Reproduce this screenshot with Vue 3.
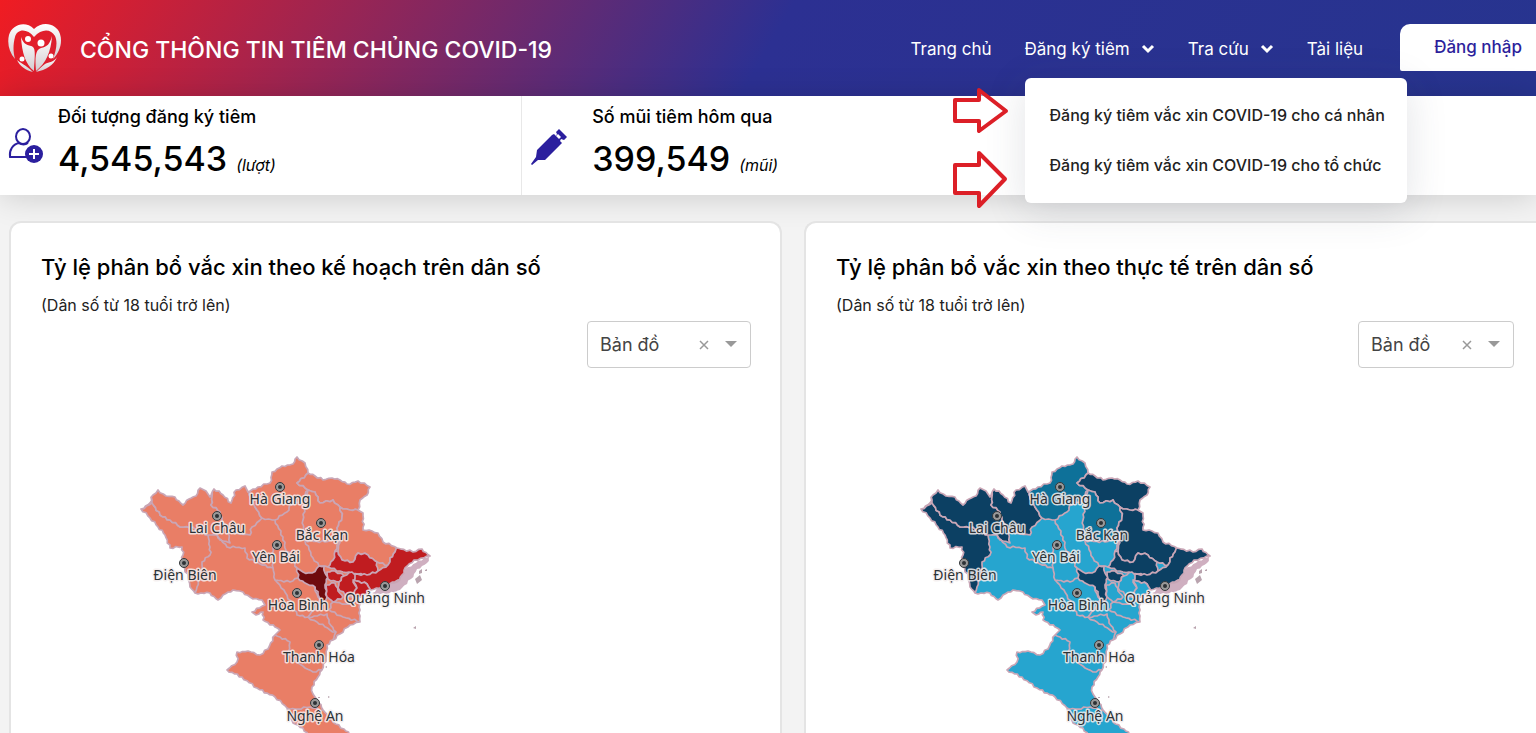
<script setup>
import { ref } from 'vue'

const menu = [
  'Đăng ký tiêm vắc xin COVID-19 cho cá nhân',
  'Đăng ký tiêm vắc xin COVID-19 cho tổ chức',
]

const land = [
  [141, 509], [150, 503], [153, 495], [158, 490], [166, 496], [175, 497], [183, 505], [189, 499], [196, 496], [200, 488],
  [206, 491], [210, 497], [214, 489], [223, 495], [231, 503], [236, 490], [245, 486], [248, 492], [258, 487], [270, 483],
  [272, 472], [282, 466], [293, 464], [297, 457], [305, 463], [308, 473], [315, 476], [323, 480], [332, 478], [340, 480],
  [347, 484], [358, 481], [370, 487], [367, 495], [360, 500], [358, 510], [363, 513], [363, 530], [372, 531], [378, 533],
  [383, 542], [397, 548], [413, 552], [422, 549], [430, 556], [414, 560], [405, 568], [402, 575], [397, 582], [385, 586],
  [371, 590], [359, 598], [360, 610], [360, 622], [350, 625], [340, 634], [333, 640], [327, 645], [326, 658], [322, 670],
  [318, 677], [312, 687], [313, 694], [317, 700], [323, 710], [333, 722], [344, 729], [352, 736], [308, 736], [303, 728],
  [293, 723], [287, 708], [275, 697], [257, 688], [242, 677], [227, 670], [237, 662], [237, 652], [248, 651], [260, 655],
  [268, 649], [275, 635], [280, 630], [263, 620], [263, 612], [256, 615], [252, 612], [265, 605], [262, 600], [250, 597],
  [243, 592], [233, 590], [223, 595], [218, 600], [210, 593], [195, 593], [190, 587], [188, 577], [182, 563], [183, 555],
  [182, 547], [170, 548], [165, 535], [158, 527], [150, 518],
]

const areas = {
  dienBien: [[141, 509], [152, 503], [160, 515], [170, 520], [180, 527], [193, 527], [208, 535], [210, 547], [210, 555], [202, 562], [202, 573], [197, 587], [195, 593], [180, 593], [150, 555]],
  laiChau: [[152, 503], [150, 488], [170, 480], [210, 480], [212, 497], [211, 505], [220, 512], [222, 520], [228, 530], [230, 543], [220, 540], [217, 535], [208, 535], [193, 527], [180, 527], [170, 520], [160, 515]],
  laoCai: [[212, 497], [212, 482], [246, 480], [250, 497], [255, 507], [262, 518], [252, 527], [250, 535], [240, 534], [228, 530], [222, 520], [220, 512], [211, 505]],
  haGiang: [[248, 480], [297, 450], [320, 466], [308, 473], [297, 483], [308, 490], [300, 502], [290, 505], [287, 512], [275, 520], [262, 518], [255, 507], [250, 497]],
  caoBang: [[308, 473], [340, 470], [380, 480], [358, 510], [350, 510], [340, 507], [333, 500], [320, 503], [315, 492], [308, 490], [297, 483]],
  bacKan: [[308, 490], [315, 492], [320, 503], [333, 500], [340, 507], [342, 517], [337, 528], [340, 537], [325, 542], [305, 541], [303, 520], [305, 503]],
  langSon: [[340, 507], [350, 510], [358, 510], [375, 515], [400, 542], [395, 552], [390, 558], [388, 565], [377, 562], [368, 555], [358, 553], [353, 562], [342, 560], [338, 551], [340, 537], [337, 528], [342, 517]],
  bacGiang: [[335, 551], [338, 551], [342, 560], [353, 562], [358, 553], [368, 555], [377, 562], [378, 571], [367, 575], [343, 572], [328, 567], [333, 560]],
  quangNinh: [[397, 546], [422, 540], [438, 557], [408, 575], [372, 594], [367, 584], [353, 580], [352, 574], [367, 575], [378, 571], [388, 565], [390, 558], [395, 552]],
  haNoi: [[297, 568], [303, 572], [312, 573], [319, 566], [324, 566], [325, 573], [328, 577], [325, 585], [327, 597], [323, 602], [318, 597], [315, 587], [307, 584], [298, 578]],
  bacNinh: [[327, 572], [335, 571], [344, 576], [339, 582], [328, 579]],
  haiDuong: [[339, 582], [344, 576], [352, 572], [355, 575], [353, 582], [357, 588], [352, 597], [345, 595], [338, 588]],
  haiPhong: [[353, 580], [367, 584], [372, 594], [365, 598], [352, 597], [357, 588]],
  hungYen: [[326, 585], [335, 583], [338, 591], [343, 597], [333, 602], [327, 597]],
}

const borders = [
  [[217, 535], [227, 547], [245, 548], [247, 558], [260, 564], [273, 568], [275, 580], [290, 582], [298, 578]],
  [[275, 520], [283, 537], [285, 548], [292, 558], [297, 568]],
  [[273, 545], [273, 568]],
  [[305, 541], [313, 558], [319, 566], [328, 567]],
  [[335, 551], [340, 537]],
  [[275, 580], [284, 590], [297, 615], [308, 617], [317, 622], [330, 630], [336, 632], [333, 640]],
  [[315, 587], [320, 600], [316, 607], [308, 617]],
  [[333, 602], [329, 610], [343, 617], [360, 622]],
  [[308, 617], [327, 614], [329, 623], [336, 632]],
  [[333, 602], [346, 604], [360, 600]],
  [[275, 635], [290, 642], [288, 652], [297, 662], [305, 668], [313, 672], [322, 670]],
  [[287, 708], [298, 709], [310, 707], [323, 710]],
]

const coast = [
  [424, 558], [431, 556], [427, 563], [417, 569], [411, 579], [400, 590], [386, 594], [372, 593], [385, 585], [397, 582], [402, 575], [408, 567],
]

const cities = [
  ['Hà Giang', 280, 487, 280, 504], ['Lai Châu', 217, 516, 217, 533], ['Bắc Kạn', 321, 523, 322, 540],
  ['Yên Bái', 277, 545, 276, 562], ['Điện Biên', 184, 563, 185, 580], ['Hòa Bình', 297, 593, 298, 610],
  ['Quảng Ninh', 385, 586, 385, 603], ['Thanh Hóa', 319, 645, 319, 662], ['Nghệ An', 315, 703, 315, 721],
]

// Adds small teeth along each edge; the result does not depend on the edge's
// direction, so neighbouring areas share the same line.
function rough(points, closed) {
  const out = []
  const count = closed ? points.length : points.length - 1
  for (let i = 0; i < count; i++) {
    const a = points[i]
    const b = points[(i + 1) % points.length]
    out.push(a)
    const length = Math.hypot(b[0] - a[0], b[1] - a[1])
    const flip = a[0] > b[0] || (a[0] === b[0] && a[1] > b[1])
    const [s, e] = flip ? [b, a] : [a, b]
    const steps = Math.max(2, Math.round(length / 3))
    const teeth = []
    for (let k = 1; k < steps; k++) {
      const t = k / steps
      const off = (k % 2 ? 1 : -1) * ((s[0] * 7 + e[1] * 13 + k * 5) % 4) * 0.35
      teeth.push([
        s[0] + (e[0] - s[0]) * t - ((e[1] - s[1]) / length) * off,
        s[1] + (e[1] - s[1]) * t + ((e[0] - s[0]) / length) * off,
      ])
    }
    out.push(...(flip ? teeth.reverse() : teeth))
  }
  if (!closed) out.push(points[points.length - 1])
  return 'M' + out.map((p) => p.map((n) => n.toFixed(1)).join(' ')).join('L') + (closed ? 'Z' : '')
}

const landPath = rough(land, true)
const coastPath = rough(coast, true)
const borderPaths = borders.map((b) => rough(b, false))
const areaPaths = Object.entries(areas).map(([name, points]) => ({ name, d: rough(points, true) }))

const red = '#c01c20'
const navy = '#0c4063'
const teal = '#0e7199'
const cyan = '#26a5cf'

const cards = [
  {
    id: 'plan',
    title: 'Tỷ lệ phân bổ vắc xin theo kế hoạch trên dân số',
    base: '#e97e66',
    fills: { bacGiang: red, quangNinh: red, haNoi: '#6f0b0e', bacNinh: red, haiDuong: red, haiPhong: red, hungYen: red },
    view: ref('Bản đồ'),
  },
  {
    id: 'actual',
    title: 'Tỷ lệ phân bổ vắc xin theo thực tế trên dân số',
    base: cyan,
    fills: { dienBien: navy, laiChau: navy, laoCai: navy, haGiang: teal, caoBang: navy, bacKan: teal, langSon: navy, bacGiang: navy, quangNinh: navy, haNoi: navy, bacNinh: navy },
    view: ref('Bản đồ'),
  },
]
</script>

<template>
  <div class="page">
    <header class="header">
      <a class="brand" href="#">
        <svg class="logo" viewBox="0 0 54 50" aria-hidden="true">
          <defs>
            <linearGradient id="silver" x1="0" y1="0" x2="0" y2="1">
              <stop offset="0" stop-color="#ffffff" />
              <stop offset="1" stop-color="#d3ccd0" />
            </linearGradient>
          </defs>
          <path fill="url(#silver)" d="M7 36C1 29-1 20 1 12 4 2 17-3 26 6 35-3 49 1 52 11c3 9-1 19-7 25 3-8 5-17 2-23C43 6 34 5 26 14 19 5 9 6 7 14c-2 7-2 15 0 22Z" />
          <path fill="url(#silver)" d="M13 14c2 6 5 8 10 9 5 1 4 8 3 25-9-7-12-19-13-34Z" />
          <path fill="url(#silver)" d="M44 13c-2 8-5 11-11 12-6 2-6 10-5 23 10-8 15-19 16-35Z" />
          <path fill="url(#silver)" d="M9 37c3 3 8 4 16 12-8-2-13-6-16-12Zm40-3c-3 5-8 5-12 7-3 2-6 5-9 8 10-2 18-7 21-15Z" />
          <circle cx="20" cy="16" r="3" fill="#fff" />
          <circle cx="33" cy="20" r="3.5" fill="#fff" />
          <circle cx="14" cy="36" r="2.5" fill="#fff" />
          <circle cx="43" cy="33" r="2.5" fill="#fff" />
        </svg>
        <span class="brand-name">CỔNG THÔNG TIN TIÊM CHỦNG COVID-19</span>
      </a>
      <nav class="nav">
        <a class="nav-link" href="#">Trang chủ</a>
        <div class="nav-group">
          <button class="nav-link" type="button" aria-expanded="true">
            Đăng ký tiêm
            <svg class="chevron" viewBox="0 0 14 10" aria-hidden="true"><path d="M2 2l5 5 5-5" /></svg>
          </button>
          <div class="menu">
            <a v-for="item in menu" :key="item" class="menu-link" href="#">{{ item }}</a>
            <svg class="pointer" viewBox="0 0 60 130" aria-hidden="true">
              <path d="M4 22h24V12l27 21-27 20V43H4Z" />
              <path d="M4 87h24V75l26 26-26 27v-13H4Z" />
            </svg>
          </div>
        </div>
        <button class="nav-link" type="button">
          Tra cứu
          <svg class="chevron" viewBox="0 0 14 10" aria-hidden="true"><path d="M2 2l5 5 5-5" /></svg>
        </button>
        <a class="nav-link" href="#">Tài liệu</a>
      </nav>
      <button class="login" type="button">Đăng nhập</button>
    </header>

    <section class="stats">
      <div class="stat">
        <svg class="stat-icon" viewBox="0 0 38 38" aria-hidden="true">
          <g fill="none" stroke="#2b1f9e" stroke-width="2">
            <ellipse cx="15" cy="9.500" rx="7" ry="7.500" />
            <path d="M19 30H2c-1-7 3-13 9-14 3 2 6 2 9 0" stroke-linejoin="round" />
          </g>
          <circle cx="26" cy="27" r="9" fill="#2b1f9e" />
          <path d="M26 22v10M21 27h10" stroke="#fff" stroke-width="2" />
        </svg>
        <div class="stat-text">
          <div class="stat-label">Đối tượng đăng ký tiêm</div>
          <div class="stat-line"><span class="stat-value">4,545,543</span><em class="stat-unit">(lượt)</em></div>
        </div>
      </div>
      <div class="stat second">
        <svg class="stat-icon" viewBox="0 0 38 38" aria-hidden="true">
          <path fill="#2b1f9e" d="M1 37l5-7 1-7L22 8l2-1 2 2 1-2-1-2 3-3 8 8-3 3-3-1-1 2 2 2-2 2L15 33l-7 0-6 5Z" />
          <path d="M26 9l2-2 3 3-2 2Z" fill="#fff" />
        </svg>
        <div class="stat-text">
          <div class="stat-label">Số mũi tiêm hôm qua</div>
          <div class="stat-line"><span class="stat-value">399,549</span><em class="stat-unit">(mũi)</em></div>
        </div>
      </div>
    </section>

    <main class="cards">
      <section v-for="card in cards" :key="card.id" class="card" :class="card.id">
        <h2 class="card-title">{{ card.title }}</h2>
        <p class="card-note">(Dân số từ 18 tuổi trở lên)</p>
        <div class="picker">
          <select v-model="card.view.value" class="picker-select" aria-label="Kiểu hiển thị">
            <option>Bản đồ</option>
          </select>
          <button class="picker-clear" type="button" aria-label="Xóa lựa chọn">
            <svg viewBox="0 0 10 10" aria-hidden="true"><path d="M1 1l8 8M9 1L1 9" /></svg>
          </button>
          <svg class="picker-caret" viewBox="0 0 12 6" aria-hidden="true"><path d="M0 0h12L6 6Z" /></svg>
        </div>
        <svg class="map" viewBox="130 440 320 293" role="img" :aria-label="card.title">
          <defs>
            <clipPath :id="'land-' + card.id"><path :d="landPath" /></clipPath>
          </defs>
          <path :d="coastPath" fill="#cfafc0" />
          <path class="isle" d="M415 579l5-4 2 5-5 4ZM419 571l3-2 0 4-3 1ZM425 570l2-1v2h-2ZM413 628l3-2v3ZM325 667l2-1v2ZM328 696l2 1-2 1ZM318 697h2v1h-2Z" />
          <g :clip-path="`url(#land-${card.id})`">
            <path :d="landPath" :fill="card.base" />
            <path v-for="area in areaPaths" :key="area.name" class="border" :d="area.d" :fill="card.fills[area.name] || card.base" />
            <path v-for="(d, i) in borderPaths" :key="i" class="border" :d="d" fill="none" />
          </g>
          <path class="border" :d="landPath" fill="none" />
          <g v-for="[name, cx, cy, tx, ty] in cities" :key="name">
            <circle :cx="cx" :cy="cy" r="4.5" class="dot-ring" />
            <circle :cx="cx" :cy="cy" r="2" fill="#2d3236" />
            <text class="city" :x="tx" :y="ty">{{ name }}</text>
          </g>
        </svg>
      </section>
    </main>
  </div>
</template>

<style>
body {
  margin: 0;
  background: #f3f3f3;
}
</style>

<style scoped>
.page {
  height: 100vh;
  overflow: hidden;
  display: flex;
  flex-direction: column;
  font-family: Inter, "Liberation Sans", sans-serif;
  color: #000;
}
button {
  font: inherit;
  border: 0;
  background: none;
  padding: 0;
  cursor: pointer;
}
a {
  color: inherit;
  text-decoration: none;
}
.header {
  flex: none;
  display: flex;
  align-items: center;
  height: 96px;
  color: #fff;
  background: linear-gradient(120deg, #f01c22 0%, #2c3092 50%, #27348f 100%);
}
.brand {
  display: flex;
  align-items: center;
  gap: 18px;
  padding-left: 8px;
}
.logo {
  width: 54px;
  height: 50px;
}
.brand-name {
  font-size: 23px;
  font-weight: 500;
  white-space: nowrap;
  padding-top: 4px;
}
.nav {
  display: flex;
  align-items: center;
  gap: 33px;
  margin-left: auto;
  margin-right: 37px;
  padding-top: 2px;
}
.nav-link {
  display: flex;
  align-items: center;
  gap: 11px;
  font-size: 17px;
  line-height: 24px;
  white-space: nowrap;
  color: #fff;
}
.nav-group {
  position: relative;
}
.chevron {
  width: 14px;
  height: 10px;
  fill: none;
  stroke: #fff;
  stroke-width: 3;
}
.menu {
  position: absolute;
  z-index: 2;
  top: 41px;
  left: 0;
  display: flex;
  flex-direction: column;
  box-sizing: border-box;
  padding: 12px 22px 13px 25px;
  border-radius: 6px;
  background: #fff;
  color: #222;
  box-shadow: 0 8px 40px rgba(60, 70, 90, 0.15);
}
.menu-link {
  font-size: 16px;
  font-weight: 500;
  line-height: 50px;
  white-space: nowrap;
}
.pointer {
  position: absolute;
  left: -74px;
  top: 0;
  width: 60px;
  height: 130px;
  overflow: visible;
  fill: #fff;
  fill-opacity: 0.6;
  stroke: #dc1f27;
  stroke-width: 4;
  stroke-linejoin: round;
}
.login {
  box-sizing: border-box;
  height: 47px;
  margin-bottom: 2px;
  padding: 0 14px 0 34px;
  border-radius: 10px 0 0 2px;
  background: #fff;
  color: #2d1f9c;
  font-size: 17px;
  font-weight: 500;
  white-space: nowrap;
}
.stats {
  flex: none;
  display: grid;
  grid-template-columns: 34% 34% 1fr;
  background: #fff;
  box-shadow: 0 2px 30px rgba(0, 0, 0, 0.16);
  height: 99px;
}
.stat {
  display: flex;
  align-items: center;
  gap: 12px;
  padding-left: 8px;
  border-right: 1px solid #e8e8e8;
}
.stat.second {
  gap: 24px;
}
.stat-icon {
  flex: none;
  width: 38px;
  height: 38px;
}
.stat-text {
  padding-top: 5px;
}
.stat-label {
  font-size: 18px;
  font-weight: 500;
  line-height: 28px;
}
.stat-line {
  display: flex;
  align-items: baseline;
  gap: 9px;
  line-height: 56px;
}
.stat-value {
  font-size: 34px;
  font-weight: 500;
}
.stat-unit {
  font-size: 16px;
}
.cards {
  flex: 1;
  display: grid;
  grid-template-columns: 773fr 732fr;
  gap: 22px;
  padding: 26px 0 0 9px;
}
.card {
  box-sizing: border-box;
  display: flex;
  flex-direction: column;
  padding: 28px 29px 0 30px;
  border: 2px solid #e4e4e4;
  border-bottom: 0;
  border-radius: 12px 12px 0 0;
  background: #fff;
}
.card.actual {
  padding-right: 22px;
  border-right: 0;
  border-top-right-radius: 0;
}
.card-title {
  margin: 0;
  font-size: 22px;
  font-weight: 500;
  line-height: 32px;
}
.card-note {
  margin: 8px 0 2px;
  font-size: 16px;
  line-height: 28px;
  color: #222;
}
.picker {
  position: relative;
  align-self: flex-end;
  width: 164px;
  height: 47px;
}
.actual .picker {
  width: 156px;
}
.picker-select {
  box-sizing: border-box;
  width: 100%;
  height: 100%;
  padding: 0 12px;
  border: 1px solid #ccc;
  border-radius: 4px;
  appearance: none;
  background: #fff;
  color: #444;
  font: 18px Inter, sans-serif;
}
.picker-clear {
  position: absolute;
  right: 42px;
  top: 19px;
  width: 10px;
  height: 10px;
  display: flex;
}
.picker-clear svg {
  width: 10px;
  height: 10px;
  stroke: #999;
  stroke-width: 1.5;
}
.picker-caret {
  position: absolute;
  right: 14px;
  top: 20px;
  width: 12px;
  height: 6px;
  fill: #999;
  pointer-events: none;
}
.map {
  flex: none;
  width: 320px;
  height: 293px;
  margin: 72px 0 0 89px;
}
.actual .map {
  margin-left: 74px;
}
.border {
  stroke: #c9a6b6;
  stroke-width: 1.7;
  stroke-linejoin: round;
}
.isle {
  fill: #b9a3ae;
}
.dot-ring {
  fill: #999;
  stroke: #34383b;
  stroke-width: 1;
}
.city {
  font-family: "Noto Sans", sans-serif;
  font-size: 14px;
  text-anchor: middle;
  fill: #2c3236;
  stroke: #f4eeee;
  stroke-opacity: 0.85;
  stroke-width: 3;
  stroke-linejoin: round;
  paint-order: stroke;
}
</style>
